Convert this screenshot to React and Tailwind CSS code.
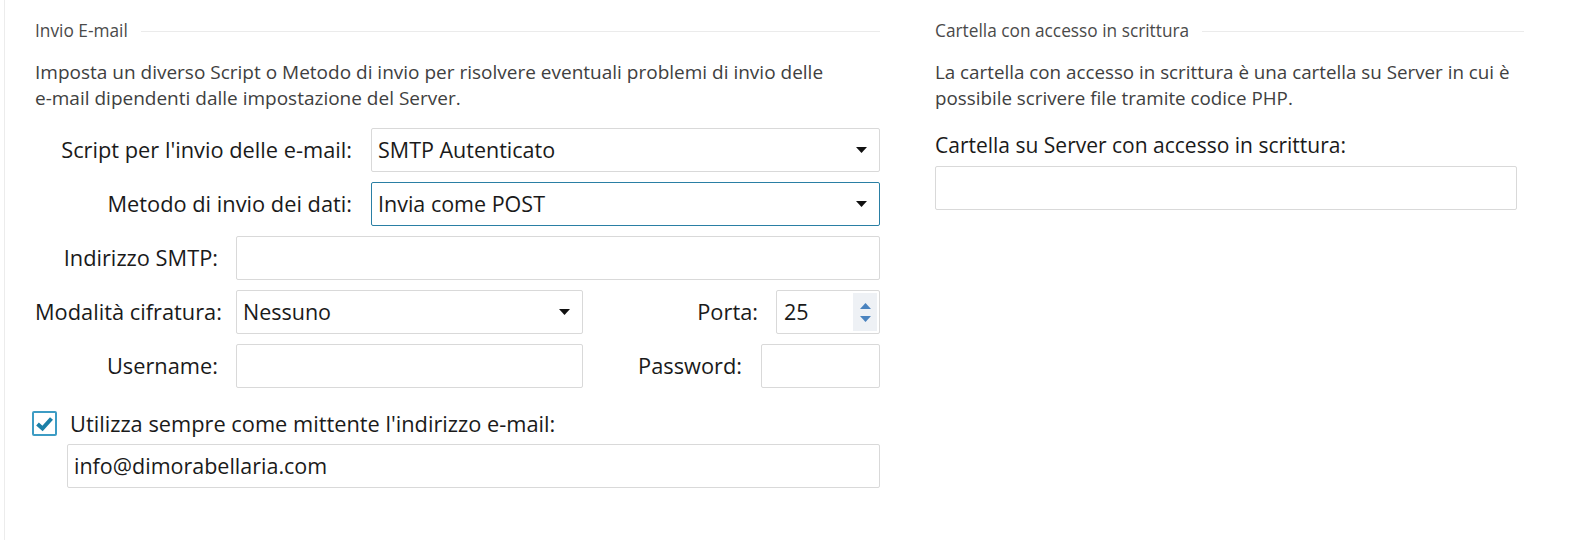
import React from "react";

const font = { fontFamily: '"Open Sans", "Noto Sans", sans-serif' };

function Arrow() {
  return (
    <svg width="11" height="6" viewBox="0 0 11 6" className="shrink-0">
      <path d="M0 0 H11 L5.5 6 Z" fill="#111" />
    </svg>
  );
}

function Select({ value, focused, className = "" }) {
  return (
    <div
      className={`h-[44px] flex items-center justify-between pl-[6px] pr-[12px] bg-white rounded-[2px] ${
        focused ? "border border-[#2a7fa4]" : "border border-[#d9d9d9]"
      } ${className}`}
    >
      <span className="text-[21.5px] text-[#1a1a1a] leading-[30px]">{value}</span>
      <Arrow />
    </div>
  );
}

function Input({ value = "", className = "" }) {
  return (
    <div
      className={`h-[44px] flex items-center px-[6px] bg-white border border-[#d9d9d9] rounded-[2px] ${className}`}
    >
      <span className="text-[21.5px] text-[#1a1a1a] leading-[30px]">{value}</span>
    </div>
  );
}

function SectionHeader({ title }) {
  return (
    <div className="flex items-center gap-[13px] h-[22px]">
      <span className="text-[17.3px] text-[#4a4a4a] whitespace-nowrap leading-[22px]">{title}</span>
      <div className="flex-1 h-px bg-[#ebebeb]" />
    </div>
  );
}

const label = "text-right text-[21.8px] leading-[30px] text-[#1a1a1a] whitespace-nowrap";

export default function App() {
  return (
    <div className="w-[1571px] h-[540px] bg-white pl-[4px]">
      <div
        style={font}
        className="h-full border-l border-[#ececec] flex gap-[55px] pl-[30px] pt-[20px]"
      >
        {/* Left column */}
        <div className="w-[845px] flex flex-col">
          <SectionHeader title="Invio E-mail" />
          <p className="mt-[17px] text-[19px] leading-[26px] text-[#404040] whitespace-nowrap">
            Imposta un diverso Script o Metodo di invio per risolvere eventuali problemi di invio delle
            <br />
            e-mail dipendenti dalle impostazione del Server.
          </p>
          <div className="mt-[17px] flex flex-col gap-[10px]">
            <div className="flex items-center gap-[19px]">
              <div className={`w-[317px] ${label}`}>Script per l'invio delle e-mail:</div>
              <Select value="SMTP Autenticato" className="flex-1" />
            </div>
            <div className="flex items-center gap-[19px]">
              <div className={`w-[317px] ${label}`}>Metodo di invio dei dati:</div>
              <Select value="Invia come POST" focused className="flex-1" />
            </div>
            <div className="flex items-center gap-[18px]">
              <div className={`w-[183px] ${label}`}>Indirizzo SMTP:</div>
              <Input className="flex-1" />
            </div>
            <div className="flex items-center gap-[18px]">
              <div className={`w-[183px] ${label}`}>Modalità cifratura:</div>
              <Select value="Nessuno" className="w-[347px]" />
              <div className={`flex-1 ${label}`}>Porta:</div>
              <div className="w-[104px] h-[44px] flex items-center justify-between bg-white border border-[#d9d9d9] rounded-[2px] pl-[7px] pr-[2px]">
                <span className="text-[21.5px] text-[#1a1a1a] leading-[30px]">25</span>
                <div className="w-[24px] h-[38px] bg-[#eef1f5] flex flex-col items-center justify-center gap-[7px]">
                  <svg width="11" height="6" viewBox="0 0 11 6"><path d="M0 6 H11 L5.5 0 Z" fill="#4a83bf" /></svg>
                  <svg width="11" height="6" viewBox="0 0 11 6"><path d="M0 0 H11 L5.5 6 Z" fill="#4a83bf" /></svg>
                </div>
              </div>
            </div>
            <div className="flex items-center gap-[18px]">
              <div className={`w-[183px] ${label}`}>Username:</div>
              <Input className="w-[347px]" />
              <div className={`flex-1 ${label} pr-px`}>Password:</div>
              <Input className="w-[119px]" />
            </div>
          </div>
          <div className="mt-[23px] h-[25px] flex items-center gap-[13px] -ml-[3px]">
            <div className="w-[25px] h-[25px] border-2 border-[#3d9cc4] rounded-[2px] flex items-center justify-center bg-white">
              <svg width="19" height="16" viewBox="0 0 19 16">
                <path d="M2.5 8 L7.5 12.5 L16.5 2.5" fill="none" stroke="#1b80a8" strokeWidth="4" strokeLinecap="butt" strokeLinejoin="miter" />
              </svg>
            </div>
            <span className="text-[21.8px] leading-[24px] text-[#1a1a1a] whitespace-nowrap">
              Utilizza sempre come mittente l'indirizzo e-mail:
            </span>
          </div>
          <div className="mt-[8px] pl-[32px]">
            <Input value="info@dimorabellaria.com" />
          </div>
        </div>

        {/* Right column */}
        <div className="w-[589px] flex flex-col">
          <SectionHeader title="Cartella con accesso in scrittura" />
          <p className="mt-[17px] text-[18.8px] leading-[26px] text-[#404040] whitespace-nowrap">
            La cartella con accesso in scrittura è una cartella su Server in cui è
            <br />
            possibile scrivere file tramite codice PHP.
          </p>
          <div className="mt-[21px] text-[21px] text-[#1a1a1a] leading-[26px] whitespace-nowrap">
            Cartella su Server con accesso in scrittura:
          </div>
          <Input className="mt-[8px] w-[582px]" />
        </div>
      </div>
    </div>
  );
}
